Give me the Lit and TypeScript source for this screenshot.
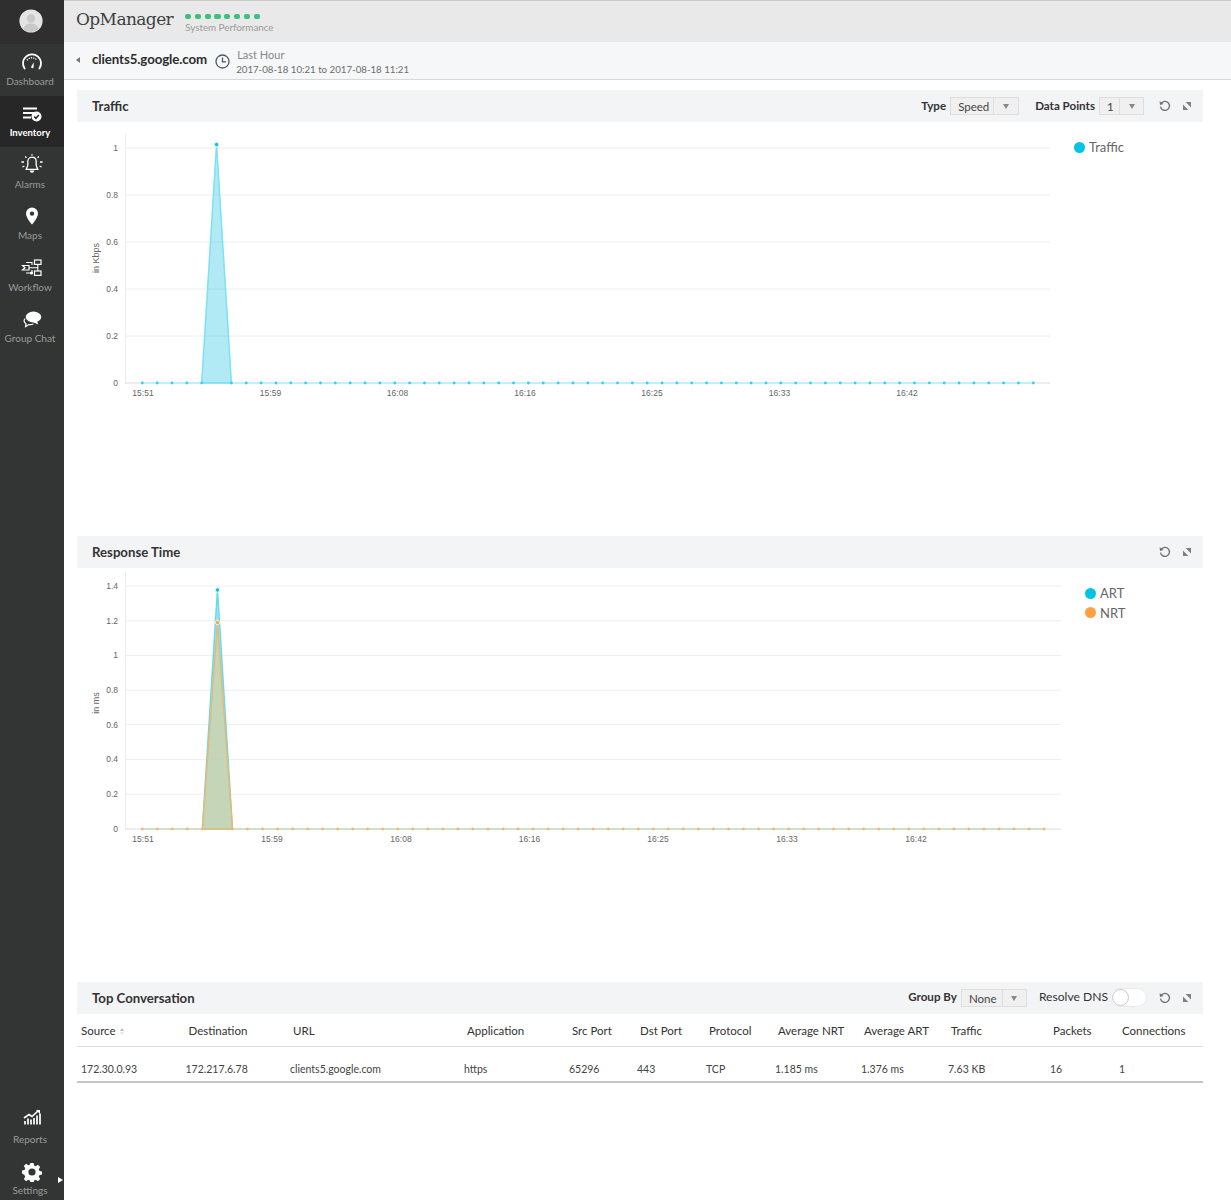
import { LitElement, html, css, svg } from "lit";
import { customElement } from "lit/decorators.js";

interface Series { color: string; fill: string; line: string; peakY: number; }
interface ChartCfg {
  id: string; vx: number; vy: number; vh: number; gridEnd: number; ticks: [string, number][];
  base: number; x0: number; dx: number; xl: number[]; unit: string; unitY: number; series: Series[];
  baseColor: string; dotColor: string;
}

const times = ["15:51", "15:59", "16:08", "16:16", "16:25", "16:33", "16:42"];

const traffic: ChartCfg = {
  id: "traffic", vx: 77, vy: 122, vh: 414, gridEnd: 1050,
  ticks: [["1", 148], ["0.8", 195], ["0.6", 242], ["0.4", 289], ["0.2", 336], ["0", 383]],
  base: 383, x0: 142.3, dx: 14.85, xl: [143, 270.5, 397.5, 525, 652, 779.5, 907], unit: "in Kbps", unitY: 258,
  series: [{ color: "#06c3e6", fill: "rgba(40,195,225,.36)", line: "#7be3f2", peakY: 144.5 }],
  baseColor: "#c4eff6", dotColor: "#2ed3ee",
};
const response: ChartCfg = {
  id: "response", vx: 77, vy: 568, vh: 414, gridEnd: 1061,
  ticks: [["1.4", 586], ["1.2", 620.8], ["1", 655.4], ["0.8", 690.2], ["0.6", 724.6], ["0.4", 759.4], ["0.2", 794.2], ["0", 829]],
  base: 829, x0: 142.3, dx: 15.03, xl: [143, 272, 401, 529.5, 658, 787, 916], unit: "in ms", unitY: 703,
  series: [
    { color: "#06c3e6", fill: "rgba(60,200,225,.45)", line: "#62dcef", peakY: 590 },
    { color: "#ffa23e", fill: "rgba(205,209,169,.8)", line: "#e8b878", peakY: 622.5 },
  ],
  baseColor: "#cfe0c8", dotColor: "#fdb56e",
};

const gridPts = (c: ChartCfg) => Array.from({ length: 61 }, (_, i) => c.x0 + i * c.dx).filter((_, i) => i !== 5);

function chart(c: ChartCfg) {
  const px = c.x0 + 5 * c.dx;
  return svg`
    <svg class="plot" width="1000" height=${c.vh} viewBox="${c.vx} ${c.vy} 1000 ${c.vh}">
      <line x1="125.5" x2="125.5" y1=${c.ticks[0][1] - 14} y2=${c.base + 1} stroke="#ececec"/>
      ${c.ticks.map(([l, y]) => svg`
        <line x1="125" x2=${c.gridEnd} y1=${y} y2=${y} stroke=${l === "0" ? "#dcdcdc" : "#eeeeee"}/>
        <text x="118" y=${y + 3} text-anchor="end" class="ax">${l}</text>`)}
      ${c.xl.map((x, i) => svg`<text x=${x} y=${c.base + 13} text-anchor="middle" class="ax">${times[i]}</text>`)}
      <text class="ax unit" text-anchor="middle" transform="translate(99 ${c.unitY}) rotate(-90)">${c.unit}</text>
      <line x1=${c.x0} x2=${c.x0 + 60 * c.dx} y1=${c.base} y2=${c.base} stroke=${c.baseColor} stroke-width="2"/>
      ${c.series.map((s) => svg`
        <polygon points="${px - c.dx},${c.base} ${px},${s.peakY} ${px + c.dx},${c.base}" fill=${s.fill}
          stroke=${s.line} stroke-width="1.5"/>`)}
      ${gridPts(c).map((x) => svg`<circle cx=${x} cy=${c.base} r="1.4" fill=${c.dotColor}/>`)}
      ${c.series.map((s) => svg`<circle cx=${px} cy=${s.peakY} r="2.2" fill=${s.color} stroke="#fff" stroke-width=".8"/>`)}
    </svg>`;
}

const icons = {
  dash: svg`<svg width="22" height="20" viewBox="0 0 22 20"><path d="M3.6 16.5A9 9 0 1 1 18.4 16.5" fill="none" stroke="#fff" stroke-width="1.8" stroke-linecap="round"/><path d="M6 8.2 A6.4 6.4 0 0 1 16 8.2" fill="none" stroke="#fff" stroke-width="1.4" stroke-dasharray="1.2 1.1"/><path d="M10 15 12.8 10.2 12.6 15.6A1.5 1.5 0 0 1 10 15Z" fill="#fff"/></svg>`,
  inv: svg`<svg width="20" height="16" viewBox="0 0 20 16"><path d="M1 2.5H15M1 7H12M1 11.5H9" stroke="#fff" stroke-width="1.9" fill="none"/><circle cx="14.5" cy="10.5" r="5" fill="#fff"/><path d="M12.2 10.5l1.7 1.8 2.9-3.3" fill="none" stroke="#262626" stroke-width="1.5"/></svg>`,
  bell: svg`<svg width="24" height="22" viewBox="0 0 24 22"><path d="M12 3.2c-2.8 0-4.2 2.2-4.2 4.6v3.6L6.2 15.4H17.8L16.2 11.4V7.8C16.2 5.4 14.8 3.2 12 3.2Z" fill="none" stroke="#fff" stroke-width="1.3"/><path d="M9.8 16.6h4.4a2.2 2.2 0 0 1-4.4 0Z" fill="#fff"/><path d="M12 .2V1.8M5.2 2.4l1.2 1.4M18.8 2.4l-1.2 1.4M1.4 8H4M20 8h2.6M2.4 13l2-1M21.6 13l-2-1" stroke="#fff" stroke-width="1.3" fill="none"/></svg>`,
  pin: svg`<svg width="14" height="18" viewBox="0 0 14 18"><path fill-rule="evenodd" d="M7 .5A6 6 0 0 0 1 6.5C1 11 7 17.5 7 17.5S13 11 13 6.5A6 6 0 0 0 7 .5ZM7 4.4a2.2 2.2 0 1 1 0 4.4 2.2 2.2 0 0 1 0-4.4Z" fill="#fff"/></svg>`,
  flow: svg`<svg width="22" height="18" viewBox="0 0 22 18"><path d="M1.5 6.5H8V11H1.5L4 8.7Z" fill="none" stroke="#fff" stroke-width="1.2"/><rect x="13.5" y="1" width="6.5" height="4.4" fill="none" stroke="#fff" stroke-width="1.2"/><rect x="13.5" y="12" width="6.5" height="4.4" fill="none" stroke="#fff" stroke-width="1.2"/><path d="M16.8 5.4V12M8 8.7H16.8M5 3.5H11V6M5 14H11V11" fill="none" stroke="#fff" stroke-width="1.1"/><circle cx="10.5" cy="14" r="1.6" fill="#fff"/></svg>`,
  chat: svg`<svg width="20" height="17" viewBox="0 0 20 17"><ellipse cx="11.5" cy="6" rx="7.8" ry="5.4" fill="#fff"/><path d="M15 9.5 16 13.5 11 11Z" fill="#fff"/><path d="M3 7.5C1.4 9.5 2 11.5 4 12.8L3.6 15.6 7 13.6C8.5 13.8 10 13.6 11.4 13" fill="none" stroke="#fff" stroke-width="1.2"/></svg>`,
  rep: svg`<svg width="18" height="16" viewBox="0 0 18 16"><path d="M1 9 6 5.5 9 7.5 15.5 1.5" fill="none" stroke="#fff" stroke-width="1.7"/><path d="M13 1H17V5Z" fill="#fff"/><path d="M2 15.5V12M5 15.5V9.5M8 15.5V10.5M11 15.5V9M14 15.5V6.5M17 15.5V4.5" stroke="#fff" stroke-width="1.7"/></svg>`,
  gear: svg`<svg width="20" height="20" viewBox="0 0 20 20"><path fill-rule="evenodd" d="M8.4 1h3.2l.5 2.5 1.6.7 2.2-1.4 2.3 2.3-1.4 2.2.7 1.6 2.5.5v3.2l-2.5.5-.7 1.6 1.4 2.2-2.3 2.3-2.2-1.4-1.6.7-.5 2.5H8.4l-.5-2.5-1.6-.7-2.2 1.4-2.3-2.3 1.4-2.2-.7-1.6L0 11.6V8.4l2.5-.5.7-1.6-1.4-2.2 2.3-2.3 2.2 1.4 1.6-.7ZM10 6.4a3.6 3.6 0 1 0 0 7.2 3.6 3.6 0 0 0 0-7.2Z" fill="#fff"/></svg>`,
  clock: svg`<svg width="15" height="15" viewBox="0 0 15 15"><circle cx="7.5" cy="7.5" r="6.5" fill="none" stroke="#4f5a66" stroke-width="1.3"/><path d="M7.5 3.4V7.8H11" fill="none" stroke="#4f5a66" stroke-width="1.3"/></svg>`,
  refresh: svg`<svg width="12" height="12" viewBox="0 0 12 12"><path d="M2.2 3.4A4.5 4.5 0 1 1 1.5 6.6" fill="none" stroke="#707070" stroke-width="1.3"/><path d="M.6 1.2 1 5 4.6 4Z" fill="#707070"/></svg>`,
  expand: svg`<svg width="8" height="8" viewBox="0 0 8 8"><path d="M2.6 0H8V5.4ZM0 2.6 5.4 8H0Z" fill="#808080"/></svg>`,
  avatar: svg`<svg width="24" height="24" viewBox="0 0 24 24"><circle cx="12" cy="12" r="11.6" fill="#e4e4e4"/><circle cx="12" cy="9.5" r="4.2" fill="#c9c9c9"/><path d="M4.4 20.2C5.4 16 8.4 14.6 12 14.6S18.6 16 19.6 20.2A11.5 11.5 0 0 1 4.4 20.2Z" fill="#c9c9c9"/></svg>`,
};

const cols = ["Source", "Destination", "URL", "Application", "Src Port", "Dst Port", "Protocol", "Average NRT", "Average ART", "Traffic", "Packets", "Connections"];
const row = ["172.30.0.93", "172.217.6.78", "clients5.google.com", "https", "65296", "443", "TCP", "1.185 ms", "1.376 ms", "7.63 KB", "16", "1"];

@customElement("app-root")
export class AppRoot extends LitElement {
  static styles = css`
    :host { display: grid; grid-template-columns: 64px 1fr; height: 1200px; font-family: "Lato", "Liberation Sans", sans-serif; color: #333; background: #fff; overflow: hidden; }
    .side { background: #333534; display: flex; flex-direction: column; position: relative; }
    .avatar { height: 44px; display: flex; align-items: center; justify-content: center; background: #2e2f2e; padding: 0 3px 3px 0; box-sizing: border-box; }
    .nav { height: 51.5px; display: flex; flex-direction: column; align-items: center; justify-content: flex-end; padding: 0 4px 9px 0; box-sizing: border-box; gap: 3px; font-size: 10px; color: #9a9a9a; white-space: nowrap; }
    .nav svg { display: block; }
    .nav .ic { height: 20px; display: flex; align-items: center; justify-content: center; margin-left: 4px; }
    .nav.on { background: #262726; color: #fff; font-weight: 700; font-size: 9.5px; }
    .nav.rep { padding-bottom: 4px; gap: 6px; }
    .nav.set { padding-bottom: 4px; gap: 2px; }
    .spacer { flex: 1; }
    .tri { position: absolute; right: 1px; bottom: 17px; border-left: 5px solid #fff; border-top: 3px solid transparent; border-bottom: 3px solid transparent; }
    .main { min-width: 0; }
    .top { height: 42px; box-sizing: border-box; border-top: 1px solid #c9c9c9; background: #e9e9e9; display: flex; align-items: center; padding-left: 12px; gap: 12px; }
    .brand { font-family: "DejaVu Serif", serif; font-size: 17px; color: #3f3f3f; letter-spacing: -.6px; padding-bottom: 5px; }
    .status { display: flex; flex-direction: column; gap: 3px; padding-top: 3px; }
    .dots { display: flex; gap: 3.6px; }
    .dots i { width: 6.2px; height: 5px; border-radius: 2px; background: #3fbf7f; }
    .status span { font-size: 9.8px; color: #9b9b9b; line-height: 11px; }
    .crumb { height: 38px; box-sizing: border-box; border-bottom: 1px solid #d8d8d8; background: #f6f7f8; display: flex; align-items: center; padding-left: 12px; }
    .back { border-right: 4px solid #777; border-top: 3px solid transparent; border-bottom: 3px solid transparent; margin: 0 12px 2px 0; }
    .host { font-size: 13.3px; font-weight: 700; color: #2c2c2c; letter-spacing: -.1px; padding-bottom: 4px; }
    .clock { margin: 1px 6px 0 8px; display: flex; }
    .range { display: flex; flex-direction: column; gap: 2px; padding-top: 3px; }
    .range b { font-weight: 400; font-size: 11px; color: #888; margin-left: 1px; line-height: 13px; }
    .range span { font-size: 9.7px; color: #6c6c6c; line-height: 13px; }
    .content { padding: 10px 28px 0 13px; }
    .sec { height: 446px; }
    .sec.last { height: auto; }
    .bar { height: 32px; background: #f3f4f6; display: flex; align-items: center; padding: 0 12px 0 15px; }
    .bar h2 { margin: 0; font-size: 13.2px; font-weight: 700; color: #333; flex: 1; }
    .tools { display: flex; align-items: center; }
    .lbl { font-size: 11.6px; font-weight: 700; color: #333; margin-right: 4px; padding-bottom: 2px; }
    .last .lbl { padding-bottom: 4px; }
    .lbl.thin { font-weight: 400; font-size: 12.1px; margin-right: 2px; }
    .sel { display: flex; height: 18px; box-sizing: border-box; border: 1px solid #dedede; background: #f0f0f0; font-size: 11.5px; color: #444; }
    .sel span { box-sizing: border-box; line-height: 18px; border-right: 1px solid #dedede; padding-left: 7px; }
    .sel em { flex: 1; display: flex; align-items: center; justify-content: center; }
    .sel em::after { content: ""; border-top: 5px solid #888; border-left: 3px solid transparent; border-right: 3px solid transparent; }
    .ics { display: flex; align-items: center; margin-left: 15px; gap: 12px; }
    .ics svg { display: block; }
    .body { display: flex; align-items: flex-start; }
    .plot { display: block; flex: none; }
    .plot .ax { font: 8.5px "Liberation Sans", sans-serif; fill: #666; }
    .plot .unit { font-size: 9px; }
    .legend { display: flex; flex-direction: column; gap: 4px; font-size: 13px; color: #666; padding-top: 17px; margin-left: -3px; }
    .legend.two { margin-left: 8px; padding-top: 17px; gap: 3.5px; }
    .legend div { display: flex; align-items: center; gap: 4px; line-height: 16px; }
    .legend i { width: 11px; height: 11px; border-radius: 50%; }
    .toggle { width: 37px; height: 19px; box-sizing: border-box; border-radius: 10px; background: #fff; border: 1px solid #eaeaea; margin: 0 -3px 1px 0; display: flex; align-items: center; padding-left: 1px; }
    .toggle i { width: 17px; height: 17px; box-sizing: border-box; border-radius: 50%; background: #fff; border: 1px solid #c8c8c8; }
    .grid { display: grid; grid-template-columns: 104.5px 104.5px 174px 105px 68px 69px 69px 86px 87px 102px 69px 1fr; padding-left: 4px; font-size: 11.5px; color: #444; }
    .head { height: 32px; align-items: center; border-bottom: 1px solid #dcdcdc; color: #333; }
    .head > span { padding-left: 3px; padding-top: 1px; display: flex; align-items: center; }
    .head > span:first-child { padding-left: 0; }
    .row { height: 36px; align-items: center; border-bottom: 2px solid #c6c6c6; font-size: 10.5px; box-sizing: border-box; padding-top: 10px; color: #444; }
    .sort { display: flex; flex-direction: column; gap: 1px; margin: 2px 0 0 4px; }
    .sort i { border-left: 2.5px solid transparent; border-right: 2.5px solid transparent; }
    .sort i:first-child { border-bottom: 3px solid #bdbdbd; }
    .sort i:last-child { border-top: 3px solid #e4e4e4; }
  `;

  private nav(icon: unknown, label: string, cls = "") {
    return html`<div class="nav ${cls}"><div class="ic">${icon}</div>${label}</div>`;
  }

  private icons() {
    return html`<div class="ics">${icons.refresh}${icons.expand}</div>`;
  }

  render() {
    return html`
      <aside class="side">
        <div class="avatar">${icons.avatar}</div>
        ${this.nav(icons.dash, "Dashboard")}
        ${this.nav(icons.inv, "Inventory", "on")}
        ${this.nav(icons.bell, "Alarms")}
        ${this.nav(icons.pin, "Maps")}
        ${this.nav(icons.flow, "Workflow")}
        ${this.nav(icons.chat, "Group Chat")}
        <div class="spacer"></div>
        ${this.nav(icons.rep, "Reports", "rep")}
        ${this.nav(icons.gear, "Settings", "set")}
        <div class="tri"></div>
      </aside>
      <main class="main">
        <header class="top">
          <div class="brand">OpManager</div>
          <div class="status">
            <div class="dots">${Array.from({ length: 8 }, () => html`<i></i>`)}</div>
            <span>System Performance</span>
          </div>
        </header>
        <div class="crumb">
          <div class="back"></div>
          <div class="host">clients5.google.com</div>
          <div class="clock">${icons.clock}</div>
          <div class="range"><b>Last Hour</b><span>2017-08-18 10:21 to 2017-08-18 11:21</span></div>
        </div>
        <div class="content">
          <section class="sec">
            <div class="bar">
              <h2>Traffic</h2>
              <div class="tools">
                <span class="lbl">Type</span>
                <div class="sel" style="width:69px"><span style="width:43px">Speed</span><em></em></div>
                <span class="lbl" style="margin-left:16px">Data Points</span>
                <div class="sel" style="width:45px"><span style="width:20px">1</span><em></em></div>
                ${this.icons()}
              </div>
            </div>
            <div class="body">
              ${chart(traffic)}
              <div class="legend"><div><i style="background:#06c3e6"></i>Traffic</div></div>
            </div>
          </section>
          <section class="sec">
            <div class="bar"><h2>Response Time</h2><div class="tools">${this.icons()}</div></div>
            <div class="body">
              ${chart(response)}
              <div class="legend two">
                <div><i style="background:#06c3e6"></i>ART</div>
                <div><i style="background:#ffa23e"></i>NRT</div>
              </div>
            </div>
          </section>
          <section class="sec last">
            <div class="bar">
              <h2>Top Conversation</h2>
              <div class="tools">
                <span class="lbl">Group By</span>
                <div class="sel" style="width:66px"><span style="width:41px">None</span><em></em></div>
                <span class="lbl thin" style="margin-left:12px">Resolve DNS</span>
                <div class="toggle"><i></i></div>
                ${this.icons()}
              </div>
            </div>
            <div class="grid head">${cols.map((c, i) => html`<span>${c}${i === 0 ? html`<span class="sort"><i></i><i></i></span>` : ""}</span>`)}</div>
            <div class="grid row">${row.map((c) => html`<span>${c}</span>`)}</div>
          </section>
        </div>
      </main>
    `;
  }
}
